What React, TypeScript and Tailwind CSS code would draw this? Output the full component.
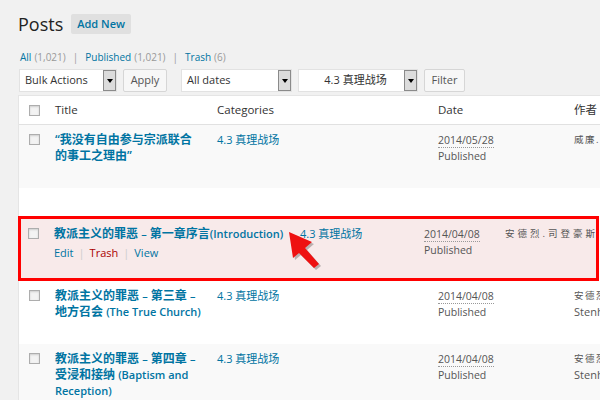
import React from "react";

const FONT = { fontFamily: '"Open Sans", "Noto Sans CJK SC", sans-serif' };

function Check() {
  return (
    <div className="w-[11px] h-[11px] border border-[#adadad] bg-[#f3f3f3] shadow-[inset_0_1px_2px_rgba(0,0,0,0.15)]" />
  );
}

function Select({ w, label, center }: { w: string; label: string; center?: boolean }) {
  return (
    <div className={`${w} h-[23px] bg-white border border-[#e2e2e2] flex items-center shrink-0`}>
      <div className={`flex-1 text-[11px] text-[#333] ${center ? "text-center pl-[8px]" : "pl-[5px]"}`}>{label}</div>
      <div className="w-[13px] h-[21px] bg-[#dcdcdc] border border-[#8a8a8a] flex items-center justify-center">
        <div className="w-0 h-0 border-l-[3px] border-r-[3px] border-t-[4px] border-l-transparent border-r-transparent border-t-black" />
      </div>
    </div>
  );
}

function Btn({ w, label }: { w: string; label: string }) {
  return (
    <div className={`${w} h-[23px] bg-[#f7f7f7] border border-[#d6d6d6] rounded-[2px] flex items-center justify-center text-[11px] text-[#555] shrink-0`}>
      {label}
    </div>
  );
}

function DateCell({ d }: { d: string }) {
  return (
    <div className="text-[10.5px] leading-[16px] text-[#555]">
      <span className="border-b border-dotted border-[#999]">{d}</span>
      <div>Published</div>
    </div>
  );
}

function L({ children }: { children: React.ReactNode }) {
  return <span className="text-[11px]">{children}</span>;
}

function Author({ second }: { second?: boolean }) {
  return (
    <div className="text-[#555] leading-[16px] whitespace-nowrap">
      <div className="text-[9.5px] tracking-[1.5px]">安德烈.司登豪斯</div>
      {second && <div className="text-[11px]">Stenhouse</div>}
    </div>
  );
}

export default function App() {
  return (
    <div style={FONT} className="w-[600px] h-[400px] overflow-hidden bg-[#f1f1f1] relative">
      <div className="pl-[18px]">
        {/* heading */}
        <div className="flex items-center pt-[13px] h-[35px]">
          <div className="text-[18px] leading-[20px] text-[#222]">Posts</div>
          <div className="ml-[8px] h-[20px] px-[6px] bg-[#e0e0e0] rounded-[2px] flex items-center text-[11px] font-semibold text-[#0074a2]">
            Add New
          </div>
        </div>
        {/* status links */}
        <div className="mt-[14px] text-[10px] leading-[16px] flex items-center pl-[2px]">
          <span className="text-[#0074a2]">All</span>
          <span className="text-[#999] ml-[3px]">(1,021)</span>
          <span className="text-[#999] mx-[7px]">|</span>
          <span className="text-[#0074a2]">Published</span>
          <span className="text-[#999] ml-[3px]">(1,021)</span>
          <span className="text-[#999] mx-[7px]">|</span>
          <span className="text-[#0074a2]">Trash</span>
          <span className="text-[#999] ml-[3px]">(6)</span>
        </div>
        {/* filter bar */}
        <div className="mt-[4px] flex items-center pl-[1px]">
          <Select w="w-[98px]" label="Bulk Actions" />
          <div className="ml-[6px]"><Btn w="w-[44px]" label="Apply" /></div>
          <div className="ml-[14px]"><Select w="w-[111px]" label="All dates" /></div>
          <div className="ml-[6px]"><Select w="w-[120px]" label="4.3 真理战场" center /></div>
          <div className="ml-[6px]"><Btn w="w-[41px]" label="Filter" /></div>
        </div>
        {/* table */}
        <div className="mt-[3px] w-[600px] bg-white border-l border-t border-[#e5e5e5] text-[11px]">
          {/* header */}
          <div className="h-[29px] flex items-center border-b border-[#e1e1e1] text-[11.5px] text-[#333]">
            <div className="w-[36px] shrink-0 pl-[10px]"><Check /></div>
            <div className="w-[162px] shrink-0">Title</div>
            <div className="w-[221px] shrink-0">Categories</div>
            <div className="w-[136px] shrink-0">Date</div>
            <div className="whitespace-nowrap">作者</div>
          </div>
          {/* row 1 */}
          <div className="h-[63px] bg-[#f9f9f9] flex pt-[7px]">
            <div className="w-[36px] shrink-0 pl-[10px] pt-[2px]"><Check /></div>
            <div className="w-[162px] shrink-0 pr-[16px] font-semibold text-[#0074a2] text-[12px] leading-[16px]">
              “我没有自由参与宗派联合的事工之理由”
            </div>
            <div className="w-[221px] shrink-0 text-[#0074a2] leading-[16px]">4.3 真理战场</div>
            <div className="w-[136px] shrink-0"><DateCell d="2014/05/28" /></div>
            <div className="text-[#555] leading-[16px] whitespace-nowrap text-[9.5px] tracking-[1.5px]">威廉.麦唐纳</div>
          </div>
          {/* spacer row */}
          <div className="h-[28px] bg-white" />
          {/* highlighted row */}
          <div className="h-[65px] w-[581px] -ml-px border-[3px] border-[#ff0000] bg-[#f8eaea] flex pt-[7px]">
            <div className="w-[33px] shrink-0 pl-[7px] pt-[2px]"><Check /></div>
            <div className="w-[246px] shrink-0">
              <div className="font-semibold text-[#0074a2] text-[12px] leading-[16px] whitespace-nowrap">
                教派主义的罪恶 <L>–</L> 第一章序言<L>(Introduction)</L>
              </div>
              <div className="mt-[3px] leading-[16px] flex items-center text-[11px]">
                <span className="text-[#0074a2]">Edit</span>
                <span className="text-[#ccc] mx-[5px]">|</span>
                <span className="text-[#a00]">Trash</span>
                <span className="text-[#ccc] mx-[5px]">|</span>
                <span className="text-[#0074a2]">View</span>
              </div>
            </div>
            <div className="w-[124px] shrink-0 text-[#0074a2] leading-[16px]">4.3 真理战场</div>
            <div className="w-[81px] shrink-0"><DateCell d="2014/04/08" /></div>
            <div className="text-[#555] leading-[16px] whitespace-nowrap text-[9.5px] tracking-[3px]">安德烈.司登豪斯</div>
          </div>
          {/* row 3 */}
          <div className="h-[63px] bg-white flex pt-[7px]">
            <div className="w-[36px] shrink-0 pl-[10px] pt-[2px]"><Check /></div>
            <div className="w-[162px] shrink-0 pr-[16px] font-semibold text-[#0074a2] text-[12px] leading-[16px]">
              教派主义的罪恶 <L>–</L> 第三章 <L>–</L> 地方召会 <L>(The True Church)</L>
            </div>
            <div className="w-[221px] shrink-0 text-[#0074a2] leading-[16px]">4.3 真理战场</div>
            <div className="w-[136px] shrink-0"><DateCell d="2014/04/08" /></div>
            <Author second />
          </div>
          {/* row 4 */}
          <div className="h-[63px] bg-[#f9f9f9] flex pt-[7px]">
            <div className="w-[36px] shrink-0 pl-[10px] pt-[2px]"><Check /></div>
            <div className="w-[162px] shrink-0 pr-[16px] font-semibold text-[#0074a2] text-[12px] leading-[16px]">
              教派主义的罪恶 <L>–</L> 第四章 <L>–</L> 受浸和接纳 <L>(Baptism and Reception)</L>
            </div>
            <div className="w-[221px] shrink-0 text-[#0074a2] leading-[16px]">4.3 真理战场</div>
            <div className="w-[136px] shrink-0"><DateCell d="2014/04/08" /></div>
            <Author second />
          </div>
        </div>
      </div>
      {/* red arrow annotation */}
      <svg className="absolute left-[284px] top-[228px]" width="44" height="46" viewBox="0 0 44 46">
        <g transform="translate(2,2)" fill="rgba(0,0,0,0.25)">
          <polygon points="5,4 28,14 21,20 35,36 30,40 15,25 9,30" />
        </g>
        <polygon points="5,4 28,14 21,20 35,36 30,40 15,25 9,30" fill="#ee1111" />
      </svg>
    </div>
  );
}
